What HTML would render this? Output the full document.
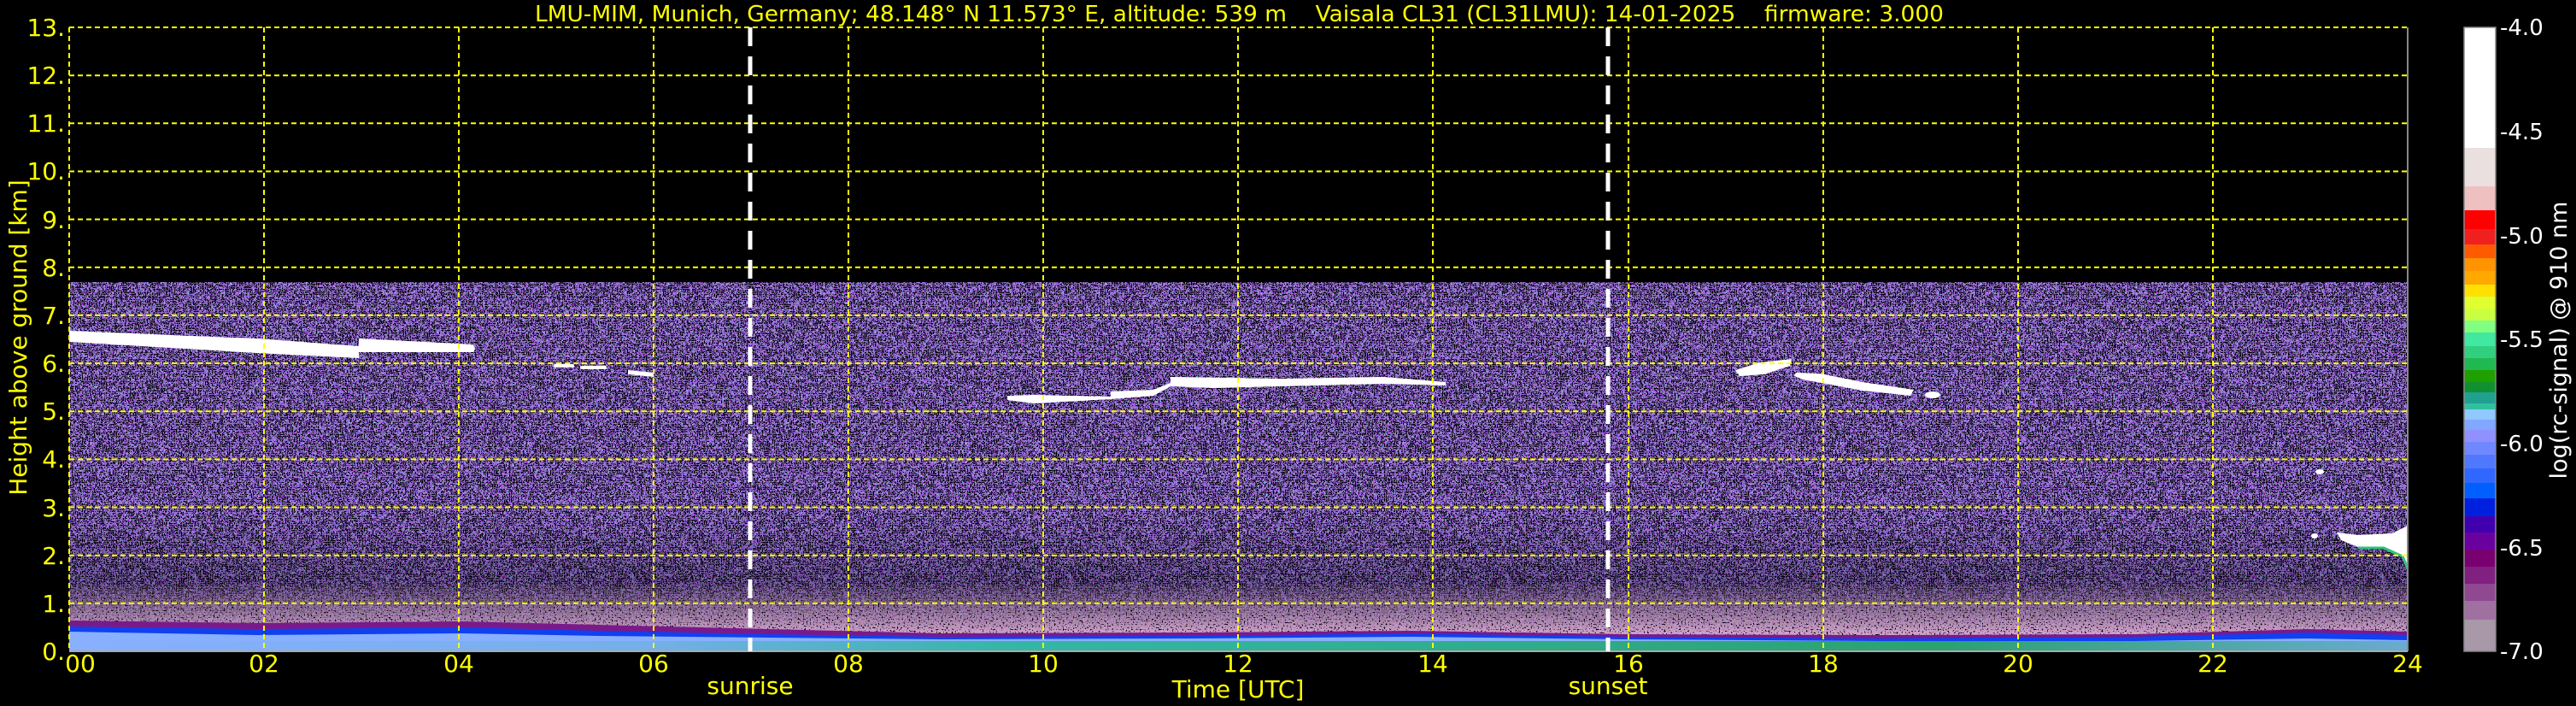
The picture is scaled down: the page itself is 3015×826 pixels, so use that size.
<!DOCTYPE html>
<html><head><meta charset="utf-8"><style>
html,body{margin:0;padding:0;background:#000;}
svg{display:block}
text{font-family:"DejaVu Sans","Liberation Sans",sans-serif;fill:#ffff00}
</style></head><body>
<svg width="3015" height="826" viewBox="0 0 3015 826" xmlns="http://www.w3.org/2000/svg">
<defs>
<filter id="nz" x="0" y="0" width="100%" height="100%">
<feTurbulence type="fractalNoise" baseFrequency="0.5" numOctaves="1" seed="7" result="t"/>
<feComponentTransfer in="t">
<feFuncR type="discrete" tableValues="0 0.1 0.3 0.45 0.6 0.85 1"/>
<feFuncG type="discrete" tableValues="0 0 0.1 0.25 0.45 0.8 1"/>
<feFuncB type="discrete" tableValues="0.3 0.6 0.9 1 1 1 0.6"/>
<feFuncA type="discrete" tableValues="0 0 0 0 1 1 0 0 0 0"/>
</feComponentTransfer>
</filter>
<filter id="nz2" x="0" y="0" width="100%" height="100%">
<feTurbulence type="fractalNoise" baseFrequency="0.5" numOctaves="1" seed="21" result="t"/>
<feComponentTransfer in="t">
<feFuncR type="discrete" tableValues="0.55 0.65 0.7 0.75"/>
<feFuncG type="discrete" tableValues="0.25 0.35 0.45 0.55"/>
<feFuncB type="discrete" tableValues="0.55 0.6 0.65 0.7"/>
<feFuncA type="discrete" tableValues="0 0 0 1 1 1 1 0"/>
</feComponentTransfer>
</filter>
<mask id="pm"><rect x="81" y="680" width="2737" height="65" fill="url(#pmg)"/></mask>
<linearGradient id="pmg" x1="0" y1="0" x2="0" y2="1">
<stop offset="0" stop-color="#fff" stop-opacity="0"/>
<stop offset="0.5" stop-color="#fff" stop-opacity="0.5"/>
<stop offset="1" stop-color="#fff" stop-opacity="1"/>
</linearGradient>
<linearGradient id="dk" x1="0" y1="0" x2="0" y2="1">
<stop offset="0" stop-color="#000" stop-opacity="0"/>
<stop offset="1" stop-color="#000" stop-opacity="0.45"/>
</linearGradient>
<linearGradient id="gr" x1="0" y1="0" x2="1" y2="0">
<stop offset="0" stop-color="#20b090" stop-opacity="0"/>
<stop offset="0.25" stop-color="#20b090" stop-opacity="0.2"/>
<stop offset="0.4" stop-color="#20b890" stop-opacity="0.8"/>
<stop offset="0.8" stop-color="#20a060" stop-opacity="0.9"/>
<stop offset="1" stop-color="#20a060" stop-opacity="0.3"/>
</linearGradient>
</defs>

<!-- noise -->
<rect x="81" y="330" width="2737" height="420" filter="url(#nz)" opacity="0.85"/>
<rect x="81" y="600" width="2737" height="145" fill="url(#dk)"/>
<rect x="81" y="680" width="2737" height="65" filter="url(#nz2)" mask="url(#pm)"/>

<!-- bottom layers -->
<path d="M81,726 L300,729 L540,727 L700,731 L900,736 L1100,741 L1400,740 L1650,738 L1900,742 L2200,743 L2500,742 L2700,736 L2818,739 L2818,762 L81,762Z" fill="#7a1a8a"/>
<path d="M81,733 L300,736 L540,734 L700,738 L900,742 L1100,745 L1400,744 L1650,741 L1900,745 L2200,747 L2500,745 L2700,740 L2818,743 L2818,762 L81,762Z" fill="#1040f0"/>
<path d="M81,739 L300,743 L540,741 L700,744 L900,746 L1100,748 L1400,747 L1650,745 L1900,748 L2200,750 L2500,750 L2700,747 L2818,749 L2818,762 L81,762Z" fill="#88b0ff"/>
<rect x="81" y="750" width="2737" height="11" fill="url(#gr)"/>

<!-- clouds -->
<g fill="#fff">
<path d="M81,387 L200,392 L300,396 L420,405 L420,396 L554,403 L556,408 L554,412 L420,412 L420,419 L300,413 L200,407 L81,400Z"/>
<rect x="648" y="426" width="24" height="4" rx="2"/>
<rect x="679" y="428" width="31" height="4" rx="2"/>
<path d="M735,433 L765,436 L765,441 L735,438Z"/>
<path d="M1179,463 L1210,462 L1300,464 L1300,458 L1350,456 L1370,448 L1370,441 L1500,443 L1620,441 L1692,447 L1692,451 L1620,449 L1500,452 L1420,454 L1370,452 L1350,463 L1300,467 L1210,472 L1179,468Z"/>
<path d="M2031,433 L2060,424 L2097,420 L2095,428 L2065,438 L2036,440Z"/>
<path d="M2102,436 L2130,437 L2180,447 L2240,456 L2236,463 L2180,457 L2110,444 L2100,440Z"/>
<ellipse cx="2262" cy="462" rx="9" ry="4"/>
<path d="M2735,623 L2760,626 L2800,624 L2818,615 L2818,665 L2812,650 L2790,640 L2760,640 L2740,632Z"/>
<ellipse cx="2709" cy="627" rx="4" ry="3"/>
<ellipse cx="2715" cy="552" rx="5" ry="3"/>
</g>
<path d="M2760,641 L2790,641 L2812,651 L2818,665" stroke="#30c080" stroke-width="3" fill="none"/>

<!-- grid -->
<g stroke="#ffff00" stroke-width="2" stroke-dasharray="6,4" fill="none">
<line x1="81" y1="88.2" x2="2818" y2="88.2"/><line x1="81" y1="144.3" x2="2818" y2="144.3"/>
<line x1="81" y1="200.5" x2="2818" y2="200.5"/><line x1="81" y1="256.6" x2="2818" y2="256.6"/>
<line x1="81" y1="312.8" x2="2818" y2="312.8"/><line x1="81" y1="368.9" x2="2818" y2="368.9"/>
<line x1="81" y1="425.1" x2="2818" y2="425.1"/><line x1="81" y1="481.2" x2="2818" y2="481.2"/>
<line x1="81" y1="537.4" x2="2818" y2="537.4"/><line x1="81" y1="593.5" x2="2818" y2="593.5"/>
<line x1="81" y1="649.7" x2="2818" y2="649.7"/><line x1="81" y1="705.8" x2="2818" y2="705.8"/>
<line x1="81" y1="32" x2="2818" y2="32"/>
<line x1="309" y1="32" x2="309" y2="762"/><line x1="537" y1="32" x2="537" y2="762"/>
<line x1="765" y1="32" x2="765" y2="762"/><line x1="993" y1="32" x2="993" y2="762"/>
<line x1="1221" y1="32" x2="1221" y2="762"/><line x1="1449" y1="32" x2="1449" y2="762"/>
<line x1="1677" y1="32" x2="1677" y2="762"/><line x1="1906" y1="32" x2="1906" y2="762"/>
<line x1="2134" y1="32" x2="2134" y2="762"/><line x1="2362" y1="32" x2="2362" y2="762"/>
<line x1="2590" y1="32" x2="2590" y2="762"/>
<line x1="81" y1="32" x2="81" y2="762"/>
</g>
<line x1="2818" y1="32" x2="2818" y2="762" stroke="#888" stroke-width="2"/>
<line x1="81" y1="762" x2="2818" y2="762" stroke="#aaa" stroke-width="2"/>

<!-- sunrise/sunset -->
<g stroke="#fff" stroke-width="5" stroke-dasharray="22,12">
<line x1="878" y1="32" x2="878" y2="762"/>
<line x1="1882" y1="32" x2="1882" y2="762"/>
</g>

<!-- title -->
<text x="626" y="25" font-size="26" textLength="1649" lengthAdjust="spacingAndGlyphs" style="white-space:pre" xml:space="preserve">LMU-MIM, Munich, Germany; 48.148° N 11.573° E, altitude: 539 m    Vaisala CL31 (CL31LMU): 14-01-2025    firmware: 3.000</text>

<!-- y ticks -->
<g font-size="28" text-anchor="end">
<text x="76" y="42">13.</text><text x="76" y="98">12.</text><text x="76" y="154">11.</text>
<text x="76" y="210">10.</text><text x="76" y="267">9.</text><text x="76" y="323">8.</text>
<text x="76" y="379">7.</text><text x="76" y="435">6.</text><text x="76" y="491">5.</text>
<text x="76" y="547">4.</text><text x="76" y="604">3.</text><text x="76" y="660">2.</text>
<text x="76" y="716">1.</text><text x="76" y="772">0.</text>
</g>
<text transform="translate(31,395) rotate(-90)" font-size="28" text-anchor="middle">Height above ground [km]</text>

<!-- x ticks -->
<g font-size="28" text-anchor="middle">
<text x="94" y="786">00</text><text x="309" y="786">02</text><text x="537" y="786">04</text>
<text x="765" y="786">06</text><text x="993" y="786">08</text><text x="1221" y="786">10</text>
<text x="1449" y="786">12</text><text x="1677" y="786">14</text><text x="1906" y="786">16</text>
<text x="2134" y="786">18</text><text x="2362" y="786">20</text><text x="2590" y="786">22</text>
<text x="2818" y="786">24</text>
<text x="878" y="812">sunrise</text><text x="1882" y="812">sunset</text>
<text x="1449" y="816">Time [UTC]</text>
</g>

<!-- colorbar -->
<g>
<rect x="2884" y="32" width="37" height="141" fill="#ffffff"/>
<rect x="2884" y="173" width="37" height="45" fill="#ebe0e0"/>
<rect x="2884" y="218" width="37" height="28" fill="#efc0c0"/>
<rect x="2884" y="246" width="37" height="22" fill="#ff0000"/>
<rect x="2884" y="268" width="37" height="18" fill="#f02020"/>
<rect x="2884" y="286" width="37" height="16" fill="#ff5a00"/>
<rect x="2884" y="302" width="37" height="15" fill="#ff9400"/>
<rect x="2884" y="317" width="37" height="16" fill="#ffa800"/>
<rect x="2884" y="333" width="37" height="14" fill="#ffe000"/>
<rect x="2884" y="347" width="37" height="15" fill="#e0ff30"/>
<rect x="2884" y="362" width="37" height="13" fill="#c8ff40"/>
<rect x="2884" y="375" width="37" height="14" fill="#80ff80"/>
<rect x="2884" y="389" width="37" height="16" fill="#40e8a0"/>
<rect x="2884" y="405" width="37" height="14" fill="#30d080"/>
<rect x="2884" y="419" width="37" height="14" fill="#20b850"/>
<rect x="2884" y="433" width="37" height="14" fill="#20a000"/>
<rect x="2884" y="447" width="37" height="12" fill="#109030"/>
<rect x="2884" y="459" width="37" height="13" fill="#20a090"/>
<rect x="2884" y="472" width="37" height="7" fill="#30c0a0"/>
<rect x="2884" y="479" width="37" height="12" fill="#90c8ff"/>
<rect x="2884" y="491" width="37" height="12" fill="#80a8ff"/>
<rect x="2884" y="503" width="37" height="14" fill="#9090ff"/>
<rect x="2884" y="517" width="37" height="15" fill="#7088ff"/>
<rect x="2884" y="532" width="37" height="16" fill="#5078ff"/>
<rect x="2884" y="548" width="37" height="17" fill="#3068ff"/>
<rect x="2884" y="565" width="37" height="18" fill="#0060ff"/>
<rect x="2884" y="583" width="37" height="21" fill="#0020e0"/>
<rect x="2884" y="604" width="37" height="19" fill="#4000b0"/>
<rect x="2884" y="623" width="37" height="20" fill="#6a00a0"/>
<rect x="2884" y="643" width="37" height="20" fill="#780070"/>
<rect x="2884" y="663" width="37" height="20" fill="#802080"/>
<rect x="2884" y="683" width="37" height="20" fill="#904890"/>
<rect x="2884" y="703" width="37" height="22" fill="#a070a0"/>
<rect x="2884" y="725" width="37" height="37" fill="#a898a8"/>
<rect x="2884" y="32" width="37" height="730" fill="none" stroke="#888" stroke-width="1.5"/>
</g>
<g font-size="26">
<text x="2926" y="41" style="fill:#fff">-4.0</text>
<text x="2926" y="163" style="fill:#fff">-4.5</text>
<text x="2926" y="285" style="fill:#fff">-5.0</text>
<text x="2926" y="406" style="fill:#fff">-5.5</text>
<text x="2926" y="528" style="fill:#fff">-6.0</text>
<text x="2926" y="650" style="fill:#fff">-6.5</text>
<text x="2926" y="771" style="fill:#fff">-7.0</text>
</g>
<text transform="translate(3004,398) rotate(-90)" font-size="27" text-anchor="middle" style="fill:#fff">log(rc-signal) @ 910 nm</text>
</svg>
</body></html>
